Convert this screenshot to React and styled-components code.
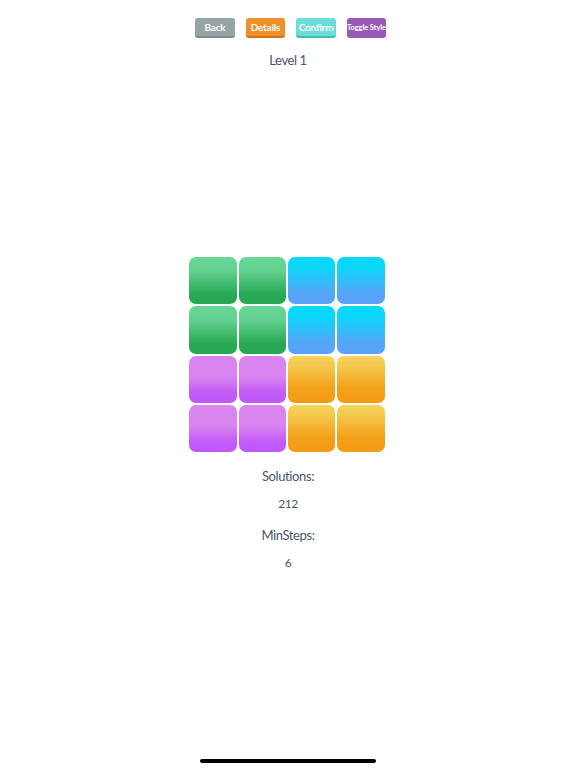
import React from "react";
import styled, { createGlobalStyle } from "styled-components";

const Global = createGlobalStyle`
  html, body { margin: 0; padding: 0; background: #ffffff; }
  body { font-family: Lato, "Noto Sans", sans-serif; }
`;

const Page = styled.div`
  width: 576px;
  height: 768px;
  display: flex;
  flex-direction: column;
  align-items: center;
  position: relative;
  color: #4a5568;
`;

const Toolbar = styled.div`
  display: flex;
  gap: 11px;
  margin-top: 18px;
  margin-left: 5px;
`;

const Button = styled.button`
  box-sizing: border-box;
  width: ${(p) => p.$w || 40}px;
  height: 20px;
  border: none;
  border-radius: 3px;
  padding: 0;
  background: ${(p) => p.$bg};
  border-bottom: 2px solid ${(p) => p.$edge};
  color: #ffffff;
  font-family: Lato, sans-serif;
  font-weight: 700;
  font-size: ${(p) => p.$fs || 10}px;
  letter-spacing: ${(p) => p.$ls ?? -0.2}px;
  display: flex;
  align-items: center;
  justify-content: center;
  white-space: nowrap;
`;

const Title = styled.div`
  margin-top: 14px;
  font-size: 13px;
  line-height: 16px;
  letter-spacing: -0.4px;
  color: #4a5568;
`;

const Board = styled.div`
  margin-top: 189px;
  margin-right: 2px;
  display: grid;
  grid-template-columns: repeat(4, 47.3px);
  grid-auto-rows: 47.3px;
  gap: 2px;
`;

const gradients = {
  green: "linear-gradient(to bottom, #68d695 0%, #62d190 30%, #29a955 78%, #27a752 100%)",
  blue: "linear-gradient(to bottom, #08d9f9 0%, #0cd6f9 25%, #55a6f8 75%, #5aa2f8 100%)",
  purple: "linear-gradient(to bottom, #da86ef 0%, #d983ef 45%, #c35bf9 78%, #c157fa 100%)",
  orange: "linear-gradient(to bottom, #f5d35c 0%, #f4c94f 20%, #f3a01a 70%, #f39c12 100%)",
};

const Tile = styled.div`
  border-radius: 7px;
  background: ${(p) => gradients[p.$color]};
`;

const Label = styled.div`
  margin-top: ${(p) => p.$mt}px;
  font-size: ${(p) => p.$fs}px;
  line-height: 16px;
  letter-spacing: -0.4px;
  color: #4a5568;
`;

const HomeIndicator = styled.div`
  position: absolute;
  left: 200px;
  bottom: 5px;
  width: 176px;
  height: 4px;
  border-radius: 2px;
  background: #000000;
`;

const layout = [
  ["green", "green", "blue", "blue"],
  ["green", "green", "blue", "blue"],
  ["purple", "purple", "orange", "orange"],
  ["purple", "purple", "orange", "orange"],
];

export default function App() {
  return (
    <>
      <Global />
      <Page>
        <Toolbar>
          <Button $bg="#95a5a6" $edge="#7f8c8d" $w={40}>Back</Button>
          <Button $bg="#f0902a" $edge="#d5701a" $w={39}>Details</Button>
          <Button $bg="#6ddcd8" $edge="#3fbfae" $w={40}>Confirm</Button>
          <Button $bg="#9b59b6" $edge="#9b59b6" $w={39} $fs={7.5} $ls={-0.1}>Toggle Style</Button>
        </Toolbar>
        <Title>Level 1</Title>
        <Board>
          {layout.flat().map((c, i) => (
            <Tile key={i} $color={c} />
          ))}
        </Board>
        <Label $mt={16} $fs={13}>Solutions:</Label>
        <Label $mt={12} $fs={12}>212</Label>
        <Label $mt={15} $fs={13}>MinSteps:</Label>
        <Label $mt={12} $fs={12}>6</Label>
        <HomeIndicator />
      </Page>
    </>
  );
}
